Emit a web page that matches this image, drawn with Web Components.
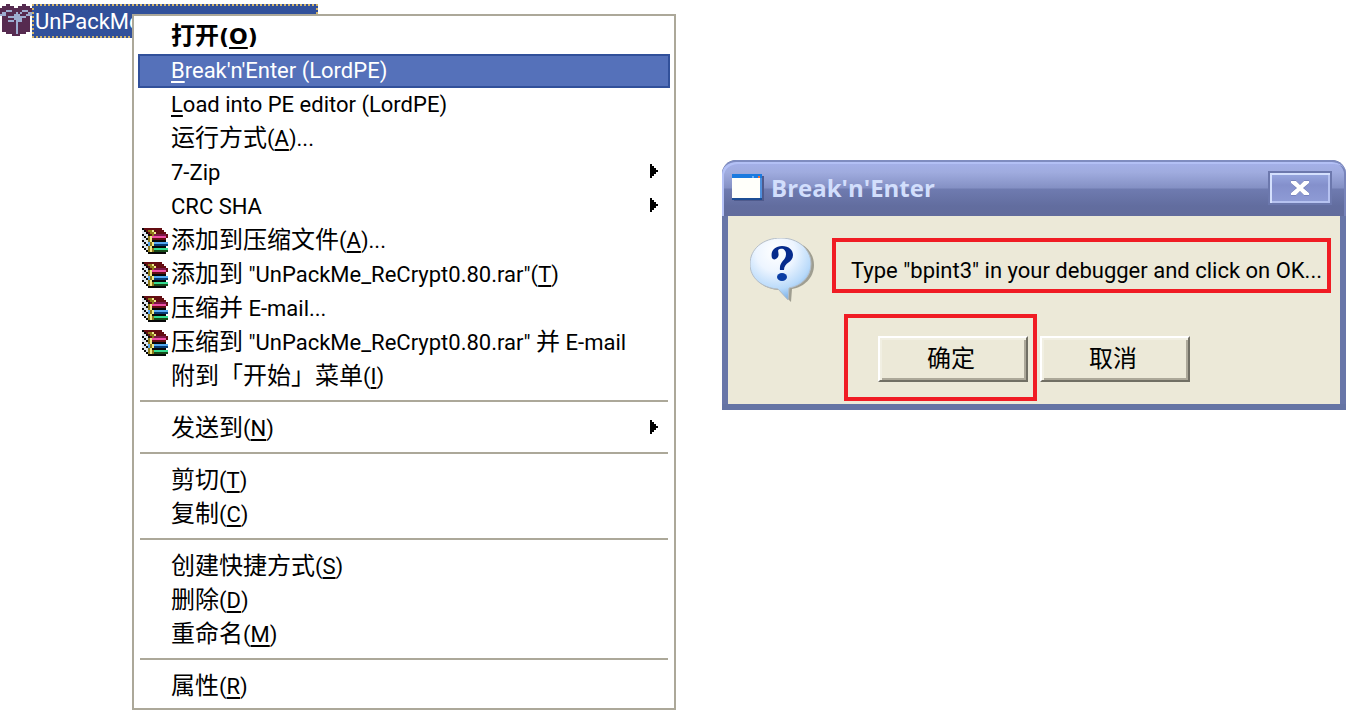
<!DOCTYPE html>
<html lang="zh-CN">
<head>
<meta charset="utf-8">
<title>Break'n'Enter</title>
<style>
body { margin: 0; background: #fff; color: #000; font: 22px/34px Roboto, "Noto Sans CJK SC", sans-serif; }
</style>
</head>
<body>
<desk-top>
  <file-item slot="file">UnPackMe</file-item>
  <context-menu slot="menu">
    <menu-item strong><span lang="zh">打开</span>(<u>O</u>)</menu-item>
    <menu-item selected><u>B</u>reak'n'Enter (LordPE)</menu-item>
    <menu-item><u>L</u>oad into PE editor (LordPE)</menu-item>
    <menu-item><span lang="zh">运行方式</span>(<u>A</u>)...</menu-item>
    <menu-item submenu>7-Zip</menu-item>
    <menu-item submenu>CRC SHA</menu-item>
    <menu-item><rar-icon slot="icon"></rar-icon><span lang="zh">添加到压缩文件</span>(<u>A</u>)...</menu-item>
    <menu-item><rar-icon slot="icon"></rar-icon><span lang="zh">添加到</span> "UnPackMe_ReCrypt0.80.rar"(<u>T</u>)</menu-item>
    <menu-item><rar-icon slot="icon"></rar-icon><span lang="zh">压缩并</span> E-mail...</menu-item>
    <menu-item><rar-icon slot="icon"></rar-icon><span lang="zh">压缩到</span> "UnPackMe_ReCrypt0.80.rar" <span lang="zh">并</span> E-mail</menu-item>
    <menu-item><span lang="zh">附到「开始」菜单</span>(<u>I</u>)</menu-item>
    <menu-line></menu-line>
    <menu-item submenu><span lang="zh">发送到</span>(<u>N</u>)</menu-item>
    <menu-line></menu-line>
    <menu-item><span lang="zh">剪切</span>(<u>T</u>)</menu-item>
    <menu-item><span lang="zh">复制</span>(<u>C</u>)</menu-item>
    <menu-line></menu-line>
    <menu-item><span lang="zh">创建快捷方式</span>(<u>S</u>)</menu-item>
    <menu-item><span lang="zh">删除</span>(<u>D</u>)</menu-item>
    <menu-item><span lang="zh">重命名</span>(<u>M</u>)</menu-item>
    <menu-line></menu-line>
    <menu-item><span lang="zh">属性</span>(<u>R</u>)</menu-item>
  </context-menu>
  <message-box slot="dialog" heading="Break'n'Enter">
    Type "bpint3" in your debugger and click on OK...
    <push-button slot="ok">确定</push-button>
    <push-button slot="cancel">取消</push-button>
  </message-box>
</desk-top>
<script>
const define = (name, markup, setup) => {
  const template = document.createElement('template');
  template.innerHTML = markup;
  customElements.define(name, class extends HTMLElement {
    constructor() {
      super();
      this.attachShadow({ mode: 'open' }).append(template.content.cloneNode(true));
    }
    connectedCallback() { if (setup) setup(this, this.shadowRoot); }
  });
};

// Builds crisp SVG cells from rows of palette letters.
const pixels = (rows, palette) => rows.map((row, y) => [...row].map((c, x) =>
  palette[c] ? `<rect x="${x}" y="${y}" width="1" height="1" fill="${palette[c]}"/>` : '').join('')).join('');

const rar = pixels([
  'krrrrrrrrr...',
  'wkrooyrrrrr..',
  'wwkrooyrrrrr.',
  'kwwkroppppppr',
  'wkwoymmmmmmmr',
  'wwkoyrrrrrrr.',
  'kwwoykkkkkkk.',
  'wkwboybbbbbbb',
  'wwkboynnnnnnn',
  'kwwoykkkkkkk.',
  '.kwoyoggggggg',
  '..koyoddddddd',
  '...kkkkkkkkk.'
], { k: '#080808', r: '#640d12', o: '#8d7a18', y: '#f0ea8a', w: '#dfe6ee', p: '#7d1748', m: '#f04ea5', b: '#55a9f2', n: '#053b76', g: '#35dc91', d: '#164a18' });

const box = pixels([
  '...pp......pp...',
  '.pppppp..pppppp.',
  'pppppppppppppppp',
  'ppplllppppplllpp',
  'pllppppplplpppll',
  'lllpppplllppplll',
  '.ppplllllllllpp.',
  '.ppppppllllpppp.',
  '.ppplllplllpppp.',
  '.ppppppplpppppp.',
  '.ppppppplpppppp.',
  '.ppppppplpppppp.',
  '.ppppppplpppppp.',
  '.ppppppplpppppp.',
  '...ppppplpppp...',
  '......pppp......'
], { p: '#562b50', l: '#9dadd0' });

define('desk-top', `
<style>
:host { display: grid; grid-template-columns: 13fr 12fr; column-gap: 46px; padding-right: 10px; align-items: start; }
::slotted([slot=file]) { grid-area: 1 / 1; }
::slotted([slot=menu]) { grid-area: 1 / 1; margin: 14px 0 8px 132px; }
::slotted([slot=dialog]) { grid-area: 1 / 2; margin-top: 160px; }
</style>
<slot name="file"></slot><slot name="menu"></slot><slot name="dialog"></slot>`);

define('file-item', `
<style>
:host { display: flex; padding-top: 4px; justify-self: start; }
svg { width: 32px; height: 32px; flex: none; }
span { box-sizing: border-box; width: 286px; height: 34px; line-height: 36px; padding-left: 3px; background: #31509a; color: #fff; outline: 2px dotted #d0b36a; outline-offset: -2px; }
</style>
<svg viewBox="0 0 16 16" shape-rendering="crispEdges" aria-hidden="true">${box}</svg><span><slot></slot></span>`);

define('rar-icon', `
<style>:host { display: block; height: 26px; } svg { display: block; width: 26px; height: 26px; }</style>
<svg viewBox="0 0 13 13" shape-rendering="crispEdges" aria-hidden="true">${rar}</svg>`);

define('context-menu', `
<style>:host { display: block; border: 2px solid #aca899; background: #fff; padding: 4px; }</style>
<div role="menu"><slot></slot></div>`);

define('menu-item', `
<style>
:host { display: block; }
button { display: flex; align-items: center; box-sizing: border-box; width: 100%; height: 34px; margin: 0; padding: 0 10px 0 2px; border: 2px solid transparent; background: none; color: #000; font: inherit; line-height: 30px; text-align: left; white-space: nowrap; }
.icon { display: flex; width: 29px; flex: none; }
.label { flex: 1; height: 32px; line-height: 32px; }
svg { display: none; width: 8px; height: 14px; margin-bottom: 4px; }
::slotted(span) { font-size: 24px; line-height: 24px; }
::slotted(u) { text-decoration-thickness: 2px; text-underline-offset: 3px; }
:host([strong]) button { font-family: "DejaVu Sans", "Noto Sans CJK SC", sans-serif; font-weight: 700; }
:host([selected]) button { background: #5571ba; border-color: #31509a; color: #fff; }
:host([submenu]) svg { display: block; }
</style>
<button type="button" role="menuitem"><span class="icon"><slot name="icon"></slot></span><span class="label"><slot></slot></span><svg viewBox="0 0 8 14" shape-rendering="crispEdges" aria-hidden="true"><path d="M0 0H2V2H4V4H6V6H8V8H6V10H4V12H2V14H0Z"/></svg></button>`);

define('menu-line', `
<style>:host { display: block; height: 2px; margin: 6px 2px 10px; background: #aca899; }</style>`);

define('push-button', `
<style>
button { display: block; box-sizing: border-box; width: 150px; height: 46px; padding: 0 4px 4px 0; border: 2px solid; border-color: #fff #716f64 #716f64 #fff; box-shadow: inset 2px 2px #f1efe2, inset -2px -2px #aca899; background: #ece9d8; color: #000; font: 24px/36px "Noto Sans CJK SC", sans-serif; }
:host { display: block; }
</style>
<button type="button"><slot></slot></button>`);

define('message-box', `
<style>
:host { display: block; border-radius: 14px 14px 0 0; background: #6876a8; overflow: hidden; }
header { display: flex; align-items: center; box-sizing: border-box; height: 56px; padding: 0 14px 2px 10px; border-top: 2px solid #7f8cc0; border-radius: 14px 14px 0 0; box-shadow: inset 2px 2px #b3c0f5, inset -2px 0 #7884ba; background: linear-gradient(#a5b1ea 0, #a0acdf 10px, #8490c4 26px, #6f7bb0 27px, #626d9f 44px, #626c9c 100%); }
header svg { width: 32px; height: 28px; flex: none; }
h1 { flex: 1; margin: 0 0 0 7px; color: #d2defc; font: 700 24px/30px "Open Sans", sans-serif; }
header button { display: grid; place-items: center; box-sizing: border-box; width: 64px; height: 34px; padding: 0; border: 2px solid #6c78ad; background: linear-gradient(#98a8e0, #8490cc 40%, #8f9cd6); box-shadow: inset 2px 2px #d4e0fd, inset -2px -2px #b6c2f0; }
header button svg { width: 18px; height: 16px; }
section { margin: 0 6px; padding: 22px 9px 3px 22px; background: #ece9d8; }
.bottom { height: 6px; background: #6574a4; }
.row { display: flex; align-items: flex-start; }
.ask { width: 64px; height: 64px; flex: none; }
.mark { box-sizing: border-box; border: 4px solid #f01c24; }
p { flex: 1; margin: 0 0 0 18px; height: 55px; padding: 0 0 0 15px; font-size: 22px; line-height: 58px; white-space: nowrap; }
.actions { margin: 12px 0 0 94px; align-items: center; gap: 3px; }
.actions .mark { padding: 18px 5px 15px 30px; }
.cancel { padding-top: 3px; }
</style>
<div role="dialog" aria-labelledby="t" aria-describedby="d">
<header>
<svg viewBox="0 0 32 28" aria-hidden="true" shape-rendering="crispEdges"><rect x="2" y="2" width="30" height="25" fill="#4f5a8c"/><rect width="30" height="26" fill="#1c4d94"/><rect width="30" height="4" fill="#1a7adf"/><rect x="26" y="2" width="2" height="2" fill="#f07038"/><rect x="20" y="2" width="2" height="2" fill="#6ab0f5"/><rect y="4" width="28" height="20" fill="#fffffa"/><rect x="28" y="4" width="2" height="20" fill="#4f8fdc"/></svg>
<h1 id="t"></h1>
<button type="button" aria-label="Close"><svg viewBox="0 0 18 16" aria-hidden="true"><path d="M0 1H5L9 5L13 1H18V3L12 8L18 13V15H13L9 11L5 15H0V13L6 8L0 3Z" fill="#fff" stroke="#6773a9" stroke-width="1" paint-order="stroke"/></svg></button>
</header>
<section>
<div class="row">
<svg class="ask" viewBox="0 0 64 64" aria-hidden="true"><defs><radialGradient id="g" cx="42%" cy="22%" r="80%"><stop offset="0" stop-color="#fff"/><stop offset=".4" stop-color="#edf5ff"/><stop offset=".75" stop-color="#b9dafa"/><stop offset="1" stop-color="#76aee6"/></radialGradient></defs><path d="M33 2C51 2 64 12 64 27C64 40 54 49 42 51L41 64L29 52C13 51 2 41 2 27C2 12 15 2 33 2Z" fill="#77776c" opacity=".65"/><path d="M31 0C48 0 61 11 61 26C61 39 51 48 39 50L38 62L28 51C12 50 0 40 0 26C0 11 13 0 31 0Z" fill="url(#g)" stroke="#b5bec8"/><path d="M22 20C20 13 25 8 32 8C39 8 43 12 43 17C43 25 34 24 34 32H30C29 23 36 23 36 16C36 12 33 10 30 11C26 12 30 15 28 19C26 22 23 22 22 20Z" fill="#062b8c"/><ellipse cx="32" cy="39" rx="5" ry="4" fill="#0a3da4"/></svg>
<p class="mark" id="d"><slot></slot></p>
</div>
<div class="row actions"><div class="mark"><slot name="ok"></slot></div><div class="cancel"><slot name="cancel"></slot></div></div>
</section>
<div class="bottom"></div>
</div>`, (host, root) => { root.querySelector('h1').textContent = host.getAttribute('heading'); });
</script>
</body>
</html>
